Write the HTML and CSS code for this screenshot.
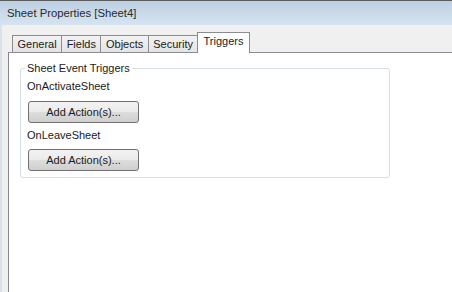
FILE: index.html
```html
<!DOCTYPE html>
<html lang="en">
<head>
    <meta charset="UTF-8">
    <title>Sheet Properties [Sheet4]</title>
    <link rel="stylesheet" href="styles.css">
</head>
<body>
    <div class="dialog">
        <div class="titlebar">Sheet Properties [Sheet4]</div>
        <div class="dialog-body">
            <div class="tabs">
                <div class="tab">General</div>
                <div class="tab">Fields</div>
                <div class="tab">Objects</div>
                <div class="tab">Security</div>
                <div class="tab active">Triggers</div>
            </div>
            <div class="panel">
                <fieldset class="group">
                    <legend>Sheet Event Triggers</legend>
                    <div class="trigger-label first">OnActivateSheet</div>
                    <button class="btn">Add Action(s)...</button>
                    <div class="trigger-label">OnLeaveSheet</div>
                    <button class="btn">Add Action(s)...</button>
                </fieldset>
            </div>
        </div>
    </div>
</body>
</html>
```

FILE: styles.css
```css
body {
    margin: 0;
    font-family: "Liberation Sans", Arial, sans-serif;
    font-size: 11px;
    color: #1a1a1a;
    background-color: #f0f0f0;
}
.dialog {
    height: 292px;
    display: flex;
    flex-direction: column;
    overflow: hidden;
}
.titlebar {
    height: 24px;
    line-height: 25px;
    padding-left: 7px;
    font-size: 11.3px;
    color: #2a2a2a;
    border-top: 1px solid #5c5c5c;
    background: linear-gradient(#bdd0e2, #d6e4f1);
}
.dialog-body {
    flex: 1;
    display: flex;
    flex-direction: column;
    border-left: 2px solid #d9e1ea;
    padding-left: 6px;
}
.tabs {
    height: 27px;
    display: flex;
    align-items: flex-end;
    padding-left: 4px;
}
.tab {
    height: 16px;
    line-height: 16px;
    padding: 0 4.5px;
    border: 1px solid #898c95;
    border-bottom: none;
    margin-right: -1px;
    background: linear-gradient(#f2f2f2, #e4e4e4);
}
.tab.active {
    height: 20px;
    line-height: 16px;
    padding: 0 6px;
    margin-left: -1px;
    margin-bottom: -1px;
    background: #fff;
    position: relative;
    z-index: 1;
}
.panel {
    flex: 1;
    background-color: #fff;
    border-top: 1px solid #898c95;
    border-left: 1px solid #828790;
    padding: 9px 0 0 11px;
}
.group {
    box-sizing: border-box;
    width: 370px;
    margin: 0;
    padding: 0 0 6px 4px;
    border: 1px solid #d5dfe5;
    border-radius: 3px;
}
.group legend {
    padding: 0 2px;
    line-height: 12px;
}
.trigger-label {
    line-height: 13px;
    margin: 6px 0 7px 2px;
}
.trigger-label.first {
    margin-top: 6px;
    margin-bottom: 8px;
}
.btn {
    display: block;
    width: 111px;
    height: 22px;
    margin-left: 3px;
    padding: 0;
    font-family: inherit;
    font-size: 11px;
    color: #1a1a1a;
    border: 1px solid #707070;
    border-radius: 3px;
    background: linear-gradient(#f2f2f2 0%, #ebebeb 50%, #dddddd 51%, #cfcfcf 100%);
}
```
